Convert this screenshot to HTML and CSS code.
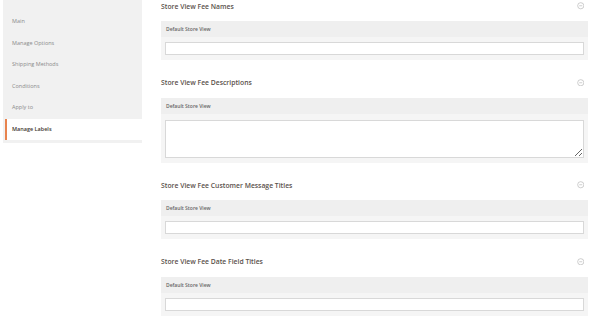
FILE: index.html
```html
<!DOCTYPE html>
<html>
<head>
  <meta charset="utf-8">
  <title>Manage Labels</title>
  <link rel="stylesheet" href="styles.css">
</head>
<body>
  <div class="page">
    <ul class="tabs">
      <li class="tab">Main</li>
      <li class="tab">Manage Options</li>
      <li class="tab">Shipping Methods</li>
      <li class="tab">Conditions</li>
      <li class="tab">Apply to</li>
      <li class="tab active">Manage Labels</li>
    </ul>
    <div class="content">
      <div class="section">
        <div class="section-title">
          <span>Store View Fee Names</span>
          <svg class="toggle" viewBox="0 0 8 8"><circle cx="4" cy="4" r="3.3"/><line x1="2.4" y1="4" x2="5.6" y2="4"/></svg>
        </div>
        <div class="panel">
          <div class="panel-head">Default Store View</div>
          <div class="panel-body"><input class="field" type="text"></div>
        </div>
      </div>
      <div class="section">
        <div class="section-title">
          <span>Store View Fee Descriptions</span>
          <svg class="toggle" viewBox="0 0 8 8"><circle cx="4" cy="4" r="3.3"/><line x1="2.4" y1="4" x2="5.6" y2="4"/></svg>
        </div>
        <div class="panel">
          <div class="panel-head">Default Store View</div>
          <div class="panel-body"><textarea class="field area"></textarea></div>
        </div>
      </div>
      <div class="section">
        <div class="section-title">
          <span>Store View Fee Customer Message Titles</span>
          <svg class="toggle" viewBox="0 0 8 8"><circle cx="4" cy="4" r="3.3"/><line x1="2.4" y1="4" x2="5.6" y2="4"/></svg>
        </div>
        <div class="panel">
          <div class="panel-head">Default Store View</div>
          <div class="panel-body"><input class="field" type="text"></div>
        </div>
      </div>
      <div class="section">
        <div class="section-title">
          <span>Store View Fee Date Field Titles</span>
          <svg class="toggle" viewBox="0 0 8 8"><circle cx="4" cy="4" r="3.3"/><line x1="2.4" y1="4" x2="5.6" y2="4"/></svg>
        </div>
        <div class="panel">
          <div class="panel-head">Default Store View</div>
          <div class="panel-body"><input class="field" type="text"></div>
        </div>
      </div>
    </div>
  </div>
</body>
</html>
```
FILE: styles.css
```css
*{margin: 0;padding: 0;box-sizing: border-box;}
ul{list-style: none;}
html, body{
  width: 100%;
  height: 100%;
  background-color: #ffffff;
  color: #514943;
  font-family: "Open Sans",arial,sans-serif;
  overflow: hidden;
}
.page{
  display: flex;
  flex-direction: row;
  align-items: flex-start;
}
.tabs{
  width: 139px;
  margin-left: 3px;
  padding-top: 11px;
  padding-bottom: 3px;
  background-color: #f1f1f1;
  flex-shrink: 0;
}
.tab{
  height: 21.5px;
  line-height: 21.5px;
  padding-left: 5px;
  margin-left: 2px;
  font-size: 5.5px;
  color: #8a8a8a;
  border-left: 2px solid transparent;
}
.tab.active{
  background-color: #fff;
  border-left-color: #e8834e;
  color: #41362f;
  font-weight: 600;
}
.content{
  margin-left: 19px;
  width: 427px;
}
.section{
  margin-bottom: 16.5px;
}
.section-title{
  height: 12px;
  display: flex;
  align-items: center;
  justify-content: space-between;
  font-size: 6.8px;
  font-weight: 600;
  color: #5a514b;
  margin-bottom: 9px;
}
.toggle{
  width: 7.5px;
  height: 7.5px;
  margin-right: 4px;
  fill: none;
  stroke: #aaa;
  stroke-width: 0.6;
}
.panel{
  background-color: #f5f5f5;
}
.panel-head{
  height: 16px;
  line-height: 16px;
  padding-left: 5px;
  font-size: 5px;
  font-weight: 600;
  color: #666;
  background-color: #efefef;
}
.panel-body{
  padding: 5px 4px;
}
.field{
  display: block;
  width: 100%;
  height: 13px;
  border: 1px solid #d8d8d8;
  background-color: #fff;
  font-family: inherit;
  font-size: 6px;
  outline: none;
}
.area{
  height: 38px;
  margin-top: 1px;
  resize: vertical;
}
```
